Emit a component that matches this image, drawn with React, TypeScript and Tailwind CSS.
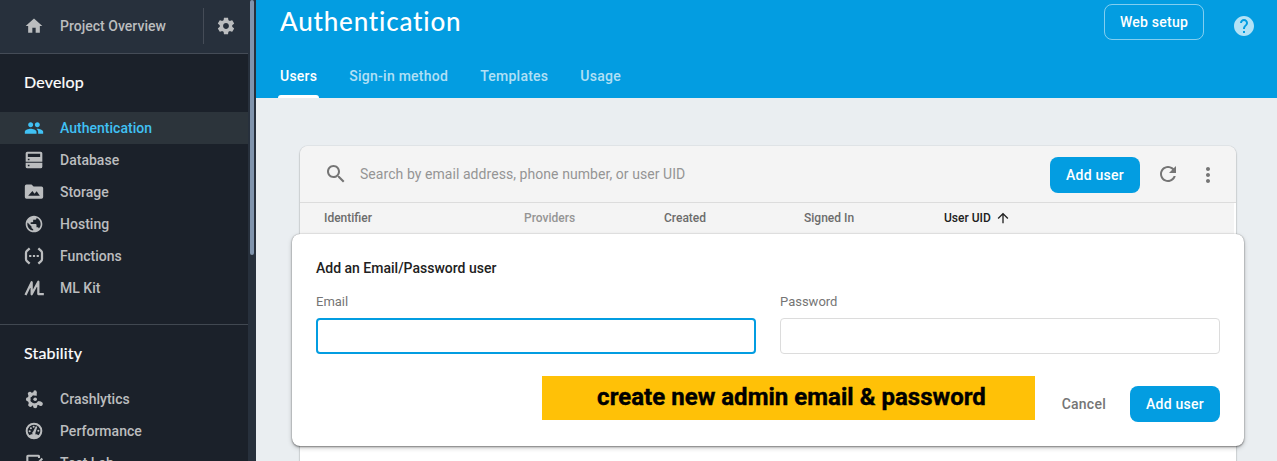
import type { ReactNode } from 'react';

function Icon({ children, className = 'size-5' }: { children: ReactNode; className?: string }) {
  return (
    <svg viewBox="0 0 24 24" fill="currentColor" className={`shrink-0 ${className}`}>
      {children}
    </svg>
  );
}

const icons = {
  home: <path d="M10 20v-6h4v6h5v-8h3L12 3 2 12h3v8z" />,
  settings: (
    <path d="M19.43 12.98c.04-.32.07-.64.07-.98s-.03-.66-.07-.98l2.11-1.65c.19-.15.24-.42.12-.64l-2-3.46c-.12-.22-.39-.3-.61-.22l-2.49 1c-.52-.4-1.08-.73-1.69-.98l-.38-2.65C14.46 2.18 14.25 2 14 2h-4c-.25 0-.46.18-.49.42l-.38 2.65c-.61.25-1.17.59-1.69.98l-2.49-1c-.23-.09-.49 0-.61.22l-2 3.46c-.13.22-.07.49.12.64l2.11 1.65c-.04.32-.07.65-.07.98s.03.66.07.98l-2.11 1.65c-.19.15-.24.42-.12.64l2 3.46c.12.22.39.3.61.22l2.49-1c.52.4 1.08.73 1.69.98l.38 2.65c.03.24.24.42.49.42h4c.25 0 .46-.18.49-.42l.38-2.65c.61-.25 1.17-.59 1.69-.98l2.49 1c.23.09.49 0 .61-.22l2-3.46c.12-.22.07-.49-.12-.64l-2.11-1.65zM12 15.5c-1.93 0-3.5-1.57-3.5-3.5s1.57-3.5 3.5-3.5 3.5 1.57 3.5 3.5-1.57 3.5-3.5 3.5z" />
  ),
  people: (
    <path d="M16 11c1.66 0 2.99-1.34 2.99-3S17.66 5 16 5s-3 1.34-3 3 1.34 3 3 3zm-8 0c1.66 0 2.99-1.34 2.99-3S9.66 5 8 5 5 6.34 5 8s1.34 3 3 3zm0 2c-2.33 0-7 1.17-7 3.5V19h14v-2.5c0-2.33-4.67-3.5-7-3.5zm8 0c-.29 0-.62.02-.97.05 1.16.84 1.97 1.97 1.97 3.45V19h6v-2.5c0-2.33-4.67-3.5-7-3.5z" />
  ),
  database: (
    <path
      fillRule="evenodd"
      d="M4 2h16a2 2 0 0 1 2 2v10H2V4a2 2 0 0 1 2-2zm.6 2.6v3.8h14.8v-3.8zM4.6 10.4v1.9h2v-1.9zM2 15.4h20V20a2 2 0 0 1-2 2H4a2 2 0 0 1-2-2zm2.6 2.3v1.9h2v-1.9z"
    />
  ),
  storage: (
    <path
      fillRule="evenodd"
      d="M3 3h6l2.5 2.5H21a2 2 0 0 1 2 2V18a2 2 0 0 1-2 2H3a2 2 0 0 1-2-2V5a2 2 0 0 1 2-2zm2 13.5h14l-3.8-5.5-2.6 3-2.5-3.2z"
    />
  ),
  hosting: (
    <path d="M12 2C6.48 2 2 6.48 2 12s4.48 10 10 10 10-4.48 10-10S17.52 2 12 2zm-1 17.93c-3.95-.49-7-3.85-7-7.93 0-.62.08-1.21.21-1.79L9 15v1c0 1.1.9 2 2 2v1.93zm6.9-2.54c-.26-.81-1-1.39-1.9-1.39h-1v-3c0-.55-.45-1-1-1H8v-2h2c.55 0 1-.45 1-1V7h2c1.1 0 2-.9 2-2v-.41c2.93 1.19 5 4.06 5 7.41 0 2.08-.8 3.97-2.1 5.39z" />
  ),
  functions: (
    <>
      <path
        fill="none"
        stroke="currentColor"
        strokeWidth="2.7"
        d="M6.8 2.8 3.5 5.8Q2.4 6.8 2.4 8.5v7q0 1.7 1.1 2.7l3.3 3M17.2 2.8l3.3 3q1.1 1 1.1 2.7v7q0 1.7-1.1 2.7l-3.3 3"
      />
      <path d="M6.2 10.7h2.6v2.6H6.2zM10.7 10.7h2.6v2.6h-2.6zM15.2 10.7h2.6v2.6h-2.6z" />
    </>
  ),
  mlkit: (
    <path
      fill="none"
      stroke="currentColor"
      strokeWidth="2.7"
      strokeLinejoin="round"
      d="M1.8 20.4 9.2 5v14.5L17.2 4.5v14.7h6.6"
    />
  ),
  crashlytics: (
    <>
      <path
        fill="none"
        stroke="currentColor"
        strokeWidth="3.2"
        d="M13 5.6a6.6 6.6 0 1 0 5.4 9.6"
      />
      <path
        stroke="currentColor"
        strokeWidth="5"
        strokeLinecap="round"
        d="M8 7.2 7.1 5.8M5.4 12.4h-.6M8 18.2l-.5.8M13.4 19.8v.8M19.2 17.4l.9.4"
      />
      <path d="M11.2 4Q11.2 1.6 13.2 1.6T15.3 4v4.2l-4.1-.4z" />
      <circle cx="13.4" cy="12.3" r="2.2" />
    </>
  ),
  performance: (
    <>
      <circle cx="12" cy="12" r="8.8" fill="none" stroke="currentColor" strokeWidth="2.4" />
      <path d="M5.5 17.5 9 16h6l3.5 1.5Q16 21.5 12 21.5t-6.5-4zM14.2 6.2l1.8.7-2.2 7a2 2 0 1 1-2.8-1.2z" />
      <circle cx="6.8" cy="12.2" r="1.25" />
      <circle cx="8.3" cy="8.6" r="1.25" />
      <circle cx="11.6" cy="6.9" r="1.25" />
      <circle cx="17.2" cy="11.6" r="1.25" />
    </>
  ),
  testlab: (
    <>
      <path
        fill="none"
        stroke="currentColor"
        strokeWidth="2.5"
        d="M18 6V3.8q0-.6-.6-.6H4.8q-.8 0-.8.8v16q0 .8.8.8H18"
      />
      <path fill="none" stroke="currentColor" strokeWidth="2.5" d="m9 12 4 4 9-9.5" />
    </>
  ),
};

type IconName = keyof typeof icons;

const sections: { title: string; items: { icon: IconName; label: string; active?: boolean }[] }[] = [
  {
    title: 'Develop',
    items: [
      { icon: 'people', label: 'Authentication', active: true },
      { icon: 'database', label: 'Database' },
      { icon: 'storage', label: 'Storage' },
      { icon: 'hosting', label: 'Hosting' },
      { icon: 'functions', label: 'Functions' },
      { icon: 'mlkit', label: 'ML Kit' },
    ],
  },
  {
    title: 'Stability',
    items: [
      { icon: 'crashlytics', label: 'Crashlytics' },
      { icon: 'performance', label: 'Performance' },
      { icon: 'testlab', label: 'Test Lab' },
    ],
  },
];

function Sidebar() {
  return (
    <aside className="flex w-64 shrink-0 bg-[#27303c]">
      <div className="w-[248px] bg-[#1b212a] text-sm font-medium tracking-[0.02px] text-[#bbbdbf]">
        <div className="flex h-[54px] items-center border-b border-[#454c57] bg-[#27303c] pb-px pl-6">
          <Icon>{icons.home}</Icon>
          <span className="ml-4 w-[143px]">Project Overview</span>
          <div className="h-9 w-px bg-[#454c57]" />
          <Icon className="ml-3 size-5">{icons.settings}</Icon>
        </div>
        {sections.map((section, i) => (
          <section key={section.title} className={i === 0 ? 'pb-5' : 'border-t border-[#414851]'}>
            <h2 className="flex h-[58px] items-center pb-0.5 pl-6 font-['Lato',sans-serif] text-[16px] font-normal tracking-[0.2px] text-white [-webkit-text-stroke:0.2px_white]">
              {section.title}
            </h2>
            {section.items.map((item) => (
              <a
                key={item.label}
                className={`flex h-8 items-center gap-4 pl-6 ${item.active ? 'bg-[#2c343b] text-[#40c1f4]' : ''}`}
              >
                <Icon>{icons[item.icon]}</Icon>
                {item.label}
              </a>
            ))}
          </section>
        ))}
      </div>
      <div className="ml-0.5 h-[255px] w-1 rounded-full bg-[#8094ad]" />
    </aside>
  );
}

function Header() {
  return (
    <header className="flex h-[98px] flex-col justify-between bg-[#039de1] text-white">
      <div className="flex h-[44px] items-center justify-between pr-[21px] pl-6">
        <h1 className="pb-0.5 font-['Lato',sans-serif] text-[26px] font-medium tracking-[0.8px]">
          Authentication
        </h1>
        <div className="flex items-center">
          <button className="h-9 w-[100px] rounded-lg border border-white/50 text-sm font-medium tracking-[0.25px]">
            Web setup
          </button>
          <Icon className="mt-2 ml-7 size-6 text-white/70">
            <path d="M12 2C6.48 2 2 6.48 2 12s4.48 10 10 10 10-4.48 10-10S17.52 2 12 2zm1 17h-2v-2h2v2zm2.07-7.75l-.9.92C13.45 12.9 13 13.5 13 15h-2v-.5c0-1.1.45-2.1 1.17-2.83l1.24-1.26c.37-.36.59-.86.59-1.41 0-1.1-.9-2-2-2s-2 .9-2 2H8c0-2.21 1.79-4 4-4s4 1.79 4 4c0 .88-.36 1.68-.93 2.25z" />
          </Icon>
        </div>
      </div>
      <nav className="flex h-[43px] gap-7 pl-[22px] text-sm font-medium tracking-[0.25px] text-white/70">
        <a className="flex flex-col justify-between px-0.5 text-white">
          <span className="pt-[11px]">Users</span>
          <span className="-mx-0.5 h-[3px] rounded-t-[3px] bg-white" />
        </a>
        {['Sign-in method', 'Templates', 'Usage'].map((tab) => (
          <a key={tab} className="px-0.5 pt-[11px]">
            {tab}
          </a>
        ))}
      </nav>
    </header>
  );
}

function AddUserButton() {
  return (
    <button className="h-9 w-[90px] rounded-lg bg-[#039de1] text-sm font-medium tracking-[0.25px] text-white">
      Add user
    </button>
  );
}

function AddUserDialog() {
  return (
    <div className="absolute top-[88px] -left-2 h-[212px] w-[952px] rounded-lg bg-white px-6 pt-6 shadow-[0_1px_2px_rgba(0,0,0,0.4),0_2px_5px_rgba(0,0,0,0.2),0_0_1px_rgba(0,0,0,0.35)]">
      <h3 className="text-sm leading-5 font-medium text-[#212121]">Add an Email/Password user</h3>
      <div className="mt-3.5 flex gap-6 text-[13px] leading-5 text-[#757575]">
        <label className="w-[440px]">
          <span>Email</span>
          <input className="mt-1.5 block h-9 w-full rounded border-2 border-[#039de1] bg-white px-2 outline-none" />
        </label>
        <label className="w-[440px]">
          <span>Password</span>
          <input
            type="password"
            className="mt-1.5 block h-9 w-full rounded border border-[#dcdcdc] bg-white px-2 outline-none"
          />
        </label>
      </div>
      <div className="mt-8 flex items-center justify-end gap-6">
        <button className="text-sm font-medium tracking-[0.25px] text-[#757575]">Cancel</button>
        <AddUserButton />
      </div>
      <div className="absolute top-[142px] left-[250px] flex h-11 w-[493px] items-center justify-center bg-[#ffc107] pb-0.5 pl-1.5 text-2xl font-bold tracking-[0.02px] text-black [-webkit-text-stroke:0.4px_black]">
        create new admin email &amp; password
      </div>
    </div>
  );
}

function UsersCard() {
  return (
    <div className="relative mt-12 ml-11 h-[400px] w-[936px] rounded-lg bg-white shadow-[0_1px_2px_rgba(0,0,0,0.35),0_0_1px_rgba(0,0,0,0.3)]">
      <div className="flex h-[57px] items-center rounded-t-lg border-b border-[#dcdcdc] bg-[#f4f4f4] pl-6 text-[#757575]">
        <Icon className="size-6">
          <path d="M15.5 14h-.79l-.28-.27C15.41 12.59 16 11.11 16 9.5 16 5.91 13.09 3 9.5 3S3 5.91 3 9.5 5.91 16 9.5 16c1.61 0 3.09-.59 4.23-1.57l.27.28v.79l5 4.99L20.49 19l-4.99-5zm-6 0C7.01 14 5 11.99 5 9.5S7.01 5 9.5 5 14 7.01 14 9.5 11.99 14 9.5 14z" />
        </Icon>
        <span className="ml-3 flex-1 text-sm tracking-[0.06px] text-[#959595]">
          Search by email address, phone number, or user UID
        </span>
        <div className="mt-0.5">
          <AddUserButton />
        </div>
        <Icon className="ml-4 size-6">
          <path d="M17.65 6.35C16.2 4.9 14.21 4 12 4c-4.42 0-7.99 3.58-7.99 8s3.57 8 7.99 8c3.73 0 6.84-2.55 7.73-6h-2.08c-.82 2.33-3.04 4-5.65 4-3.31 0-6-2.69-6-6s2.69-6 6-6c1.66 0 3.14.69 4.22 1.78L13 11h7V4l-2.35 2.35z" />
        </Icon>
        <Icon className="mt-0.5 mr-4 ml-4 size-6">
          <path d="M12 8c1.1 0 2-.9 2-2s-.9-2-2-2-2 .9-2 2 .9 2 2 2zm0 2c-1.1 0-2 .9-2 2s.9 2 2 2 2-.9 2-2-.9-2-2-2zm0 6c-1.1 0-2 .9-2 2s.9 2 2 2 2-.9 2-2-.9-2-2-2z" />
        </Icon>
      </div>
      <div className="mr-0.5 flex h-[31px] items-center bg-[#f4f4f4] pb-0.5 pl-6 text-xs font-medium text-[#6c6c6c]">
        <span className="w-[200px]">Identifier</span>
        <span className="w-[140px] text-[#959595]">Providers</span>
        <span className="w-[140px]">Created</span>
        <span className="w-[140px]">Signed In</span>
        <span className="flex items-center gap-1 text-[#212121]">
          User UID
          <Icon className="size-4">
            <path d="M4 12l1.41 1.41L11 7.83V20h2V7.83l5.58 5.59L20 12l-8-8-8 8z" />
          </Icon>
        </span>
      </div>
      <AddUserDialog />
    </div>
  );
}

export default function App() {
  return (
    <div className="flex h-[461px] w-[1277px] overflow-hidden bg-[#eaeef1] font-['Roboto',sans-serif]">
      <Sidebar />
      <main className="min-w-0 flex-1">
        <Header />
        <UsersCard />
      </main>
    </div>
  );
}
